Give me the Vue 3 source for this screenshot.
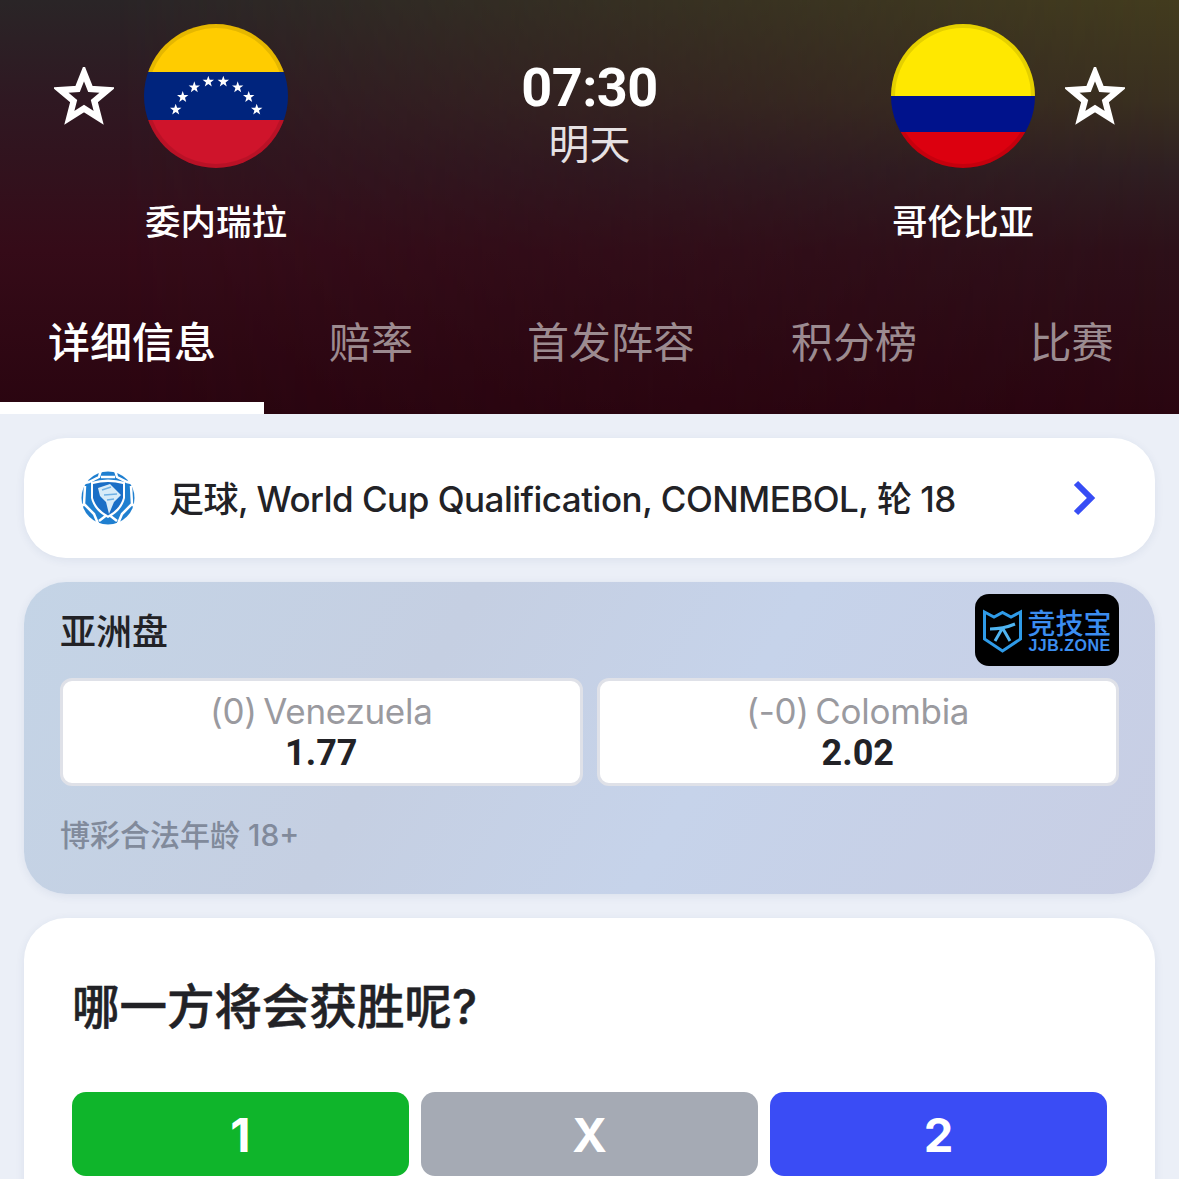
<template>
  <div class="page">
    <header class="match-header">
      <div class="teams">
        <div class="team">
          <svg class="fav" viewBox="-1 -1 62 60"><path d="M30 5 L36.6 21.7 L54.5 22.8 L40.7 34.2 L45.2 51.6 L30 42 L14.8 51.6 L19.3 34.2 L5.500 22.8 L23.4 21.7 Z" /></svg>
          <div class="team-col">
            <svg class="flag" viewBox="0 0 144 144">
              <defs>
                <clipPath id="ven"><circle cx="72" cy="72" r="72" /></clipPath>
                <polygon id="flag-star" points="0,-6 1.400,-1.900 5.700,-1.900 2.300,0.700 3.500,4.900 0,2.400 -3.500,4.900 -2.300,0.700 -5.700,-1.900 -1.400,-1.900" fill="#fff" />
              </defs>
              <g clip-path="url(#ven)">
                <rect width="144" height="48" fill="#ffcc00" />
                <rect y="48" width="144" height="48" fill="#00247d" />
                <rect y="96" width="144" height="48" fill="#cf142b" />
                <use v-for="s in stars" :key="s[0]" href="#flag-star" :x="s[0]" :y="s[1]" />
              </g>
              <path d="M4.100 48 A72 72 0 0 1 139.900 48 L135.600 48 A68 68 0 0 0 8.400 48 Z" fill="#000" opacity=".1" />
              <path d="M4.100 96 A72 72 0 0 0 139.900 96 L135.600 96 A68 68 0 0 1 8.400 96 Z" fill="#000" opacity=".1" />
            </svg>
            <div class="team-name">委内瑞拉</div>
          </div>
        </div>
        <div class="time-box">
          <div class="time">07:30</div>
          <div class="day">明天</div>
        </div>
        <div class="team">
          <div class="team-col">
            <svg class="flag" viewBox="0 0 144 144">
              <defs>
                <clipPath id="col"><circle cx="72" cy="72" r="72" /></clipPath>
              </defs>
              <g clip-path="url(#col)">
                <rect width="144" height="72" fill="#ffe800" />
                <rect y="72" width="144" height="36" fill="#00128c" />
                <rect y="108" width="144" height="36" fill="#dc000f" />
              </g>
              <path d="M0 72 A72 72 0 0 1 144 72 L140 72 A68 68 0 0 0 4 72 Z" fill="#000" opacity=".1" />
              <path d="M9.650 108 A72 72 0 0 0 134.350 108 L129.700 108 A68 68 0 0 1 14.300 108 Z" fill="#000" opacity=".1" />
            </svg>
            <div class="team-name">哥伦比亚</div>
          </div>
          <svg class="fav" viewBox="-1 -1 62 60"><path d="M30 5 L36.6 21.7 L54.5 22.8 L40.7 34.2 L45.2 51.6 L30 42 L14.8 51.6 L19.3 34.2 L5.500 22.8 L23.4 21.7 Z" /></svg>
        </div>
      </div>
      <nav class="tabs">
        <a v-for="(tab, i) in tabs" :key="tab" class="tab" :class="{ active: i === 0 }">{{ tab }}</a>
      </nav>
    </header>

    <main class="content">
      <div class="card league">
        <svg class="league-logo" viewBox="0 0 56 56">
          <circle cx="28" cy="28" r="26.500" fill="#1f7fd0" />
          <path d="M21 0 L19 7 L9 12 L0 14 M35 0 L37 7 L47 12 L56 14 M5 16 L4 34 L0 38 M51 16 L52 34 L56 38 M4 34 L14 44 L19 56 M52 34 L42 44 L37 56 M19 51 L28 44 L37 51 M21 7 L35 7" fill="none" stroke="#fff" stroke-width="2.500" />
          <path d="M11 12 Q28 7 45 12 L45 28 Q42 41 28 48 Q14 41 11 28 Z" fill="#fff" />
          <path d="M13 14 Q28 10 43 14 L43 28 Q40 39 28 45.500 Q16 39 13 28 Z" fill="#1a6ec6" />
          <path d="M18 18 L30 14 L41 25 L34 32 L29 44 L26 32 L20 26 Z" fill="#d8ebf8" />
          <path d="M22 20 L31 17 M24 25 L37 24 M27 30 L34 29" stroke="#6fb0e4" stroke-width="1.500" />
        </svg>
        <span class="league-text">足球, World Cup Qualification, CONMEBOL, 轮 18</span>
        <svg class="chevron" viewBox="0 0 28 38"><path d="M6 4 L21 19 L6 34" /></svg>
      </div>

      <div class="card odds">
        <div class="odds-head">
          <span class="odds-title">亚洲盘</span>
          <div class="jjb">
            <svg class="jjb-mark" viewBox="0 0 39 44">
              <path d="M1.500 3 L11 8 L19.500 3.500 L28 8 L37.500 3 L37.500 30 L19.500 42 L1.500 30 Z" fill="none" stroke="#2f9be8" stroke-width="3" />
              <path d="M7 20 Q20 20 32 15 M19.500 19 L12 32 M19.500 19 L27 32" fill="none" stroke="#4fb4f0" stroke-width="3" />
            </svg>
            <div class="jjb-words">
              <span class="jjb-cn">竞技宝</span>
              <span class="jjb-en">JJB.ZONE</span>
            </div>
          </div>
        </div>
        <div class="odds-row">
          <div v-for="o in odds" :key="o.name" class="odd">
            <span class="odd-name">{{ o.name }}</span>
            <span class="odd-val">{{ o.val }}</span>
          </div>
        </div>
        <div class="legal">博彩合法年龄 18+</div>
      </div>

      <div class="card vote">
        <h2 class="vote-title">哪一方将会获胜呢?</h2>
        <div class="vote-btns">
          <button class="vote-btn green">1</button>
          <button class="vote-btn gray">X</button>
          <button class="vote-btn blue">2</button>
        </div>
      </div>
    </main>
  </div>
</template>

<script setup>
const tabs = ['详细信息', '赔率', '首发阵容', '积分榜', '比赛']

const odds = [
  { name: '(0) Venezuela', val: '1.77' },
  { name: '(-0) Colombia', val: '2.02' }
]

// stars on the arc of the Venezuelan flag
const stars = [
  [31.7, 85.7],
  [38.7, 73],
  [50.3, 63.3],
  [64.3, 57.7],
  [79.3, 57.7],
  [93.7, 63.3],
  [104.7, 73],
  [112.7, 85.7]
]
</script>

<style>
html, body {
  margin: 0;
  background: #ebeff7;
  overflow: hidden;
}
</style>

<style scoped>
.page {
  width: 1179px;
  height: 1179px;
  overflow: hidden;
  font-family: Inter, "Noto Sans CJK SC", sans-serif;
  background: #ebeff7;
}

.match-header {
  height: 414px;
  position: relative;
  color: #fff;
  background: linear-gradient(180deg, #2a2527 0, #2f1822 100px, #350b18 250px, #2a0510 414px);
}

/* olive glow coming in from the top right */
.match-header::before {
  content: "";
  position: absolute;
  inset: 0;
  background: linear-gradient(180deg, #433c1e 0, #3a3020 100px, #2f1f22 170px, #2d1019 250px, #2a0510 414px);
  -webkit-mask-image: linear-gradient(90deg, transparent 10%, #000 100%);
  mask-image: linear-gradient(90deg, transparent 10%, #000 100%);
}

.teams {
  position: relative;
  display: flex;
  justify-content: space-between;
  height: 314px;
  padding: 24px 54px 0;
  box-sizing: border-box;
}

.team {
  display: flex;
  align-items: flex-start;
  gap: 30px;
}

.team-col {
  display: flex;
  flex-direction: column;
  align-items: center;
  width: 144px;
}

.flag {
  width: 144px;
  height: 144px;
  display: block;
}

.fav {
  width: 60px;
  height: 58px;
  margin-top: 43px;
}

.fav path {
  fill: none;
  stroke: #fff;
  stroke-width: 6.500;
}

.team-name {
  margin-top: 30px;
  font-size: 35.500px;
  line-height: 50px;
  font-weight: 500;
  white-space: nowrap;
}

.time-box {
  position: absolute;
  left: 0;
  right: 0;
  top: 58px;
  text-align: center;
}

.time {
  font-family: Roboto, sans-serif;
  font-size: 54px;
  line-height: 60px;
  font-weight: 700;
  letter-spacing: -0.500px;
}

.day {
  font-size: 41px;
  line-height: 52px;
  color: #e6e1e3;
}

.tabs {
  position: relative;
  display: grid;
  grid-template-columns: 264px 214px 266px 220px 215px;
  height: 100px;
}

.tab {
  font-size: 42px;
  line-height: 58px;
  text-align: center;
  color: rgba(255, 255, 255, 0.55);
  box-sizing: border-box;
}

.tab.active {
  color: #fff;
  font-weight: 500;
  border-bottom: 12px solid #fff;
}

.content {
  padding: 24px;
  display: flex;
  flex-direction: column;
  gap: 24px;
}

.card {
  background: #fff;
  border-radius: 42px;
  box-shadow: 0 2px 10px rgba(40, 60, 110, 0.08);
}

.league {
  height: 120px;
  display: flex;
  align-items: center;
  padding: 0 57px 0 56px;
  gap: 33px;
}

.league-logo {
  width: 56px;
  height: 56px;
  flex: none;
}

.league-text {
  flex: 1;
  font-size: 35px;
  line-height: 44px;
  margin-top: 2px;
  font-weight: 500;
  color: #222226;
  letter-spacing: -0.500px;
  white-space: nowrap;
}

.chevron {
  width: 28px;
  height: 38px;
  flex: none;
}

.chevron path {
  fill: none;
  stroke: #374df5;
  stroke-width: 6;
}

.odds {
  height: 312px;
  box-sizing: border-box;
  padding: 12px 36px 0;
  background: linear-gradient(120deg, #c4d4e6 0%, #c5cfe2 35%, #c6d3ea 60%, #c8cee4 100%);
}

.odds-head {
  display: flex;
  justify-content: space-between;
  align-items: center;
  height: 72px;
}

.odds-title {
  font-size: 36px;
  line-height: 44px;
  margin-top: 4px;
  font-weight: 500;
  color: #222226;
}

.jjb {
  width: 144px;
  height: 72px;
  background: #000;
  border-radius: 14px;
  display: flex;
  align-items: center;
  box-sizing: border-box;
  padding: 2px 7px 0 8px;
  gap: 5px;
}

.jjb-mark {
  width: 39px;
  height: 44px;
  flex: none;
}

.jjb-words {
  display: flex;
  flex-direction: column;
  align-items: center;
  width: 85px;
}

.jjb-cn {
  font-size: 28px;
  line-height: 28px;
  font-weight: 500;
  color: #3b8df0;
}

.jjb-en {
  font-family: "Liberation Sans", sans-serif;
  font-size: 16px;
  line-height: 15px;
  font-weight: 700;
  color: #3b8df0;
  letter-spacing: 0.500px;
  white-space: nowrap;
}

.odds-row {
  display: grid;
  grid-template-columns: 1fr 1fr;
  gap: 14px;
  margin-top: 12px;
}

.odd {
  height: 108px;
  box-sizing: border-box;
  background: #fff;
  border: 3px solid #dfe1e8;
  border-radius: 12px;
  display: flex;
  flex-direction: column;
  align-items: center;
  justify-content: center;
}

.odd-name {
  font-size: 35px;
  line-height: 42px;
  color: #9a9a9f;
  letter-spacing: -0.300px;
  word-spacing: -3px;
}

.odd-val {
  font-family: Roboto, sans-serif;
  font-size: 36px;
  line-height: 42px;
  font-weight: 700;
  color: #222226;
}

.legal {
  margin-top: 29px;
  font-size: 30px;
  line-height: 40px;
  font-weight: 500;
  color: #818a9b;
}

.vote {
  height: 400px;
  padding: 60px 48px 0;
  box-sizing: border-box;
}

.vote-title {
  margin: 0;
  font-size: 47.500px;
  line-height: 58px;
  font-weight: 500;
  -webkit-text-stroke: 0.500px #222226;
  color: #222226;
}

.vote-btns {
  display: grid;
  grid-template-columns: repeat(3, 1fr);
  gap: 12px;
  margin-top: 56px;
}

.vote-btn {
  height: 84px;
  border: none;
  border-radius: 14px;
  color: #fff;
  font-family: inherit;
  font-size: 47px;
  font-weight: 700;
}

.green { background: #0fb52b; }
.gray { background: #a5aab4; }
.blue { background: #3a4cf5; }
</style>
